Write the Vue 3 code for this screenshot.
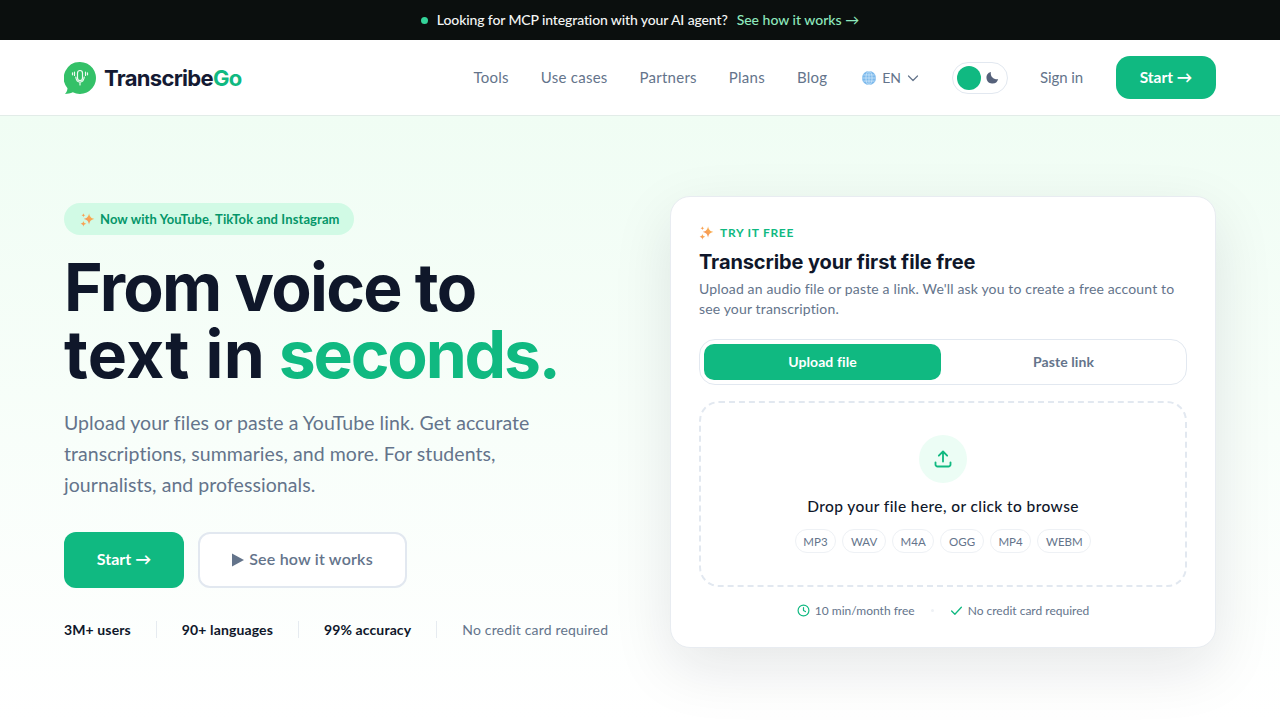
<template>
  <div class="page">
    <div class="promo">
      <span class="promo-dot"></span>
      <span class="promo-text">Looking for MCP integration with your AI agent?</span>
      <a class="promo-link">See how it works →</a>
    </div>

    <header class="nav">
      <a class="logo">
        <svg class="logo-mark" width="32" height="32" viewBox="0 0 32 32">
          <path d="M16 0a16 16 0 1 1-7.2 30.3C6.600 31.500 3.500 32 1 32c1.400-1.500 2.300-3.300 2.500-5.800A16 16 0 0 1 16 0z" fill="#34c168" />
          <g fill="none" stroke="#fff" stroke-width="1.200" stroke-linecap="round" opacity=".92">
            <rect x="13.500" y="8.500" width="5" height="10" rx="2.500" />
            <path d="M11.800 15c.3 3 2 5 4.200 5s3.900-2 4.200-5M16 20v3" />
            <path d="M10.500 10v3.500M8.500 10.800v2M21.500 10v3.500M23.500 10.800v2" />
          </g>
        </svg>
        <span class="logo-text">Transcribe<em>Go</em></span>
      </a>
      <nav class="nav-links">
        <a v-for="link in navLinks" :key="link">{{ link }}</a>
      </nav>
      <div class="lang">
        <svg width="14" height="14" viewBox="0 0 16 16">
          <circle cx="8" cy="8" r="8" fill="#7cb9ec" />
          <g fill="none" stroke="#d6ebfb" stroke-width=".8">
            <ellipse cx="8" cy="8" rx="3.500" ry="8" />
            <path d="M8 0v16M0 8h16M1.600 4.500h12.800M1.600 11.500h12.800" />
          </g>
        </svg>
        <span>EN</span>
        <svg width="12" height="12" viewBox="0 0 12 12" fill="none" stroke="#64748b" stroke-width="1.200" stroke-linecap="round" stroke-linejoin="round"><path d="M1.500 4l4.500 4.500L10.500 4" /></svg>
      </div>
      <div class="theme">
        <span class="theme-knob"></span>
        <svg width="15" height="15" viewBox="0 0 24 24" fill="#55617a"><path d="M21 14.500A9.500 9.500 0 0 1 9.500 3a9.500 9.500 0 1 0 11.500 11.500z" /></svg>
      </div>
      <a class="signin">Sign in</a>
      <a class="nav-start">Start →</a>
    </header>

    <main class="hero">
      <section class="hero-left">
        <div class="badge">
          <svg width="15" height="15" viewBox="0 0 24 24"><use href="#sparkle" /></svg>
          Now with YouTube, TikTok and Instagram
        </div>
        <h1 class="headline">From voice to<br /><span class="headline-mid">text in</span> <em>seconds.</em></h1>
        <p class="lede">Upload your files or paste a YouTube link. Get accurate transcriptions, summaries, and more. For students, journalists, and professionals.</p>
        <div class="cta-row">
          <a class="cta-start">Start →</a>
          <a class="cta-video">
            <svg width="12" height="14" viewBox="0 0 12 14" fill="#64748b"><path d="M0 .5v13L12 7z" /></svg>
            See how it works
          </a>
        </div>
        <ul class="stats">
          <li v-for="stat in stats" :key="stat">{{ stat }}</li>
          <li class="stats-muted">No credit card required</li>
        </ul>
      </section>

      <section class="card">
        <div class="eyebrow">
          <svg width="15" height="15" viewBox="0 0 24 24">
            <defs>
              <linearGradient id="spark-fill" x1="0" y1="1" x2="1" y2="0">
                <stop offset="0" stop-color="#f4845f" />
                <stop offset="1" stop-color="#fcc14a" />
              </linearGradient>
              <g id="sparkle" fill="url(#spark-fill)">
                <path d="M14.500 2c1 5.500 2.800 7.800 8.500 9-5.700 1.200-7.500 3.500-8.500 9-1-5.500-2.800-7.800-8.500-9 5.700-1.200 7.500-3.500 8.500-9z" />
                <path d="M5.500 14c.5 3 1.400 4 4.500 4.800-3.100.7-4 1.700-4.500 4.700-.5-3-1.400-4-4.500-4.700 3.100-.8 4-1.800 4.500-4.800z" />
                <path d="M5.500 1.500c.3 2.200 1 3 3.200 3.500-2.200.5-2.900 1.300-3.200 3.500C5.200 6.300 4.500 5.500 2.300 5c2.200-.5 2.900-1.300 3.200-3.500z" />
              </g>
            </defs>
            <use href="#sparkle" />
          </svg>
          <span>TRY IT FREE</span>
        </div>
        <h2 class="card-title">Transcribe your first file free</h2>
        <p class="card-sub">Upload an audio file or paste a link. We'll ask you to create a free account to see your transcription.</p>

        <div class="tabs">
          <button class="tab tab-active">Upload file</button>
          <button class="tab">Paste link</button>
        </div>

        <div class="drop">
          <span class="drop-icon">
            <svg width="20" height="20" viewBox="0 0 24 24" fill="none" stroke="#10b981" stroke-width="2.200" stroke-linecap="round" stroke-linejoin="round">
              <path d="M12 15V3.500M7 8l5-5 5 5M3 16v2.500A2.500 2.500 0 0 0 5.500 21h13a2.500 2.500 0 0 0 2.500-2.500V16" />
            </svg>
          </span>
          <p class="drop-text">Drop your file here, or click to browse</p>
          <div class="formats">
            <span v-for="format in formats" :key="format" class="format">{{ format }}</span>
          </div>
        </div>

        <div class="card-foot">
          <span class="foot-item">
            <svg width="13" height="13" viewBox="0 0 24 24" fill="none" stroke="#10b981" stroke-width="2.200" stroke-linecap="round" stroke-linejoin="round"><circle cx="12" cy="12" r="10" /><path d="M12 6.500V12l3.500 2" /></svg>
            10 min/month free
          </span>
          <span class="foot-dot"></span>
          <span class="foot-item">
            <svg width="13" height="13" viewBox="0 0 24 24" fill="none" stroke="#10b981" stroke-width="2.400" stroke-linecap="round" stroke-linejoin="round"><path d="M3 13l6 6L21 6" /></svg>
            No credit card required
          </span>
        </div>
      </section>
    </main>
  </div>
</template>

<script setup>
const navLinks = ['Tools', 'Use cases', 'Partners', 'Plans', 'Blog']
const stats = ['3M+ users', '90+ languages', '99% accuracy']
const formats = ['MP3', 'WAV', 'M4A', 'OGG', 'MP4', 'WEBM']
</script>

<style scoped>
.page {
  height: 720px;
  overflow: hidden;
  display: flex;
  flex-direction: column;
  font-family: Lato, "Noto Sans", sans-serif;
  color: #0f172a;
  background: #fff;
}

.promo {
  height: 40px;
  flex: none;
  box-sizing: border-box;
  display: flex;
  align-items: center;
  justify-content: center;
  padding-bottom: 2px;
  background: #0b0f0e;
  font-size: 14px;
  font-weight: 500;
}

.promo-dot {
  width: 7px;
  height: 7px;
  margin-top: 2px;
  border-radius: 50%;
  background: #34d399;
  margin-right: 9px;
}

.promo-text {
  color: #f4f6f5;
  letter-spacing: -0.12px;
}

.promo-link {
  margin-left: 9px;
  color: #8ee8bd;
}

.nav {
  height: 75px;
  flex: none;
  box-sizing: content-box;
  display: flex;
  align-items: center;
  padding: 0 64px;
  background: #fff;
  border-bottom: 1px solid #e2ece8;
}

.logo {
  display: flex;
  align-items: center;
  gap: 8px;
  margin-right: auto;
}

.logo-text {
  font-family: Inter, sans-serif;
  font-size: 22px;
  font-weight: 700;
  letter-spacing: -0.7px;
  color: #141a33;
}

.logo-text em {
  font-style: normal;
  color: #10b981;
}

.nav-links {
  display: flex;
  gap: 32px;
  padding-bottom: 2px;
  font-size: 15px;
  letter-spacing: 0.25px;
  color: #64748b;
}

.lang {
  display: flex;
  align-items: center;
  gap: 6px;
  margin-left: 35px;
  font-size: 14px;
  color: #64748b;
}

.theme {
  width: 56px;
  height: 32px;
  margin-left: 33px;
  box-sizing: border-box;
  display: flex;
  align-items: center;
  gap: 4px;
  padding-left: 4px;
  border: 1px solid #e2e8f0;
  border-radius: 16px;
  background: #fff;
}

.theme-knob {
  width: 24px;
  height: 24px;
  border-radius: 50%;
  background: #10b981;
}

.signin {
  margin-left: 32px;
  padding-bottom: 2px;
  font-size: 15px;
  letter-spacing: -0.1px;
  color: #64748b;
}

.nav-start {
  width: 100px;
  height: 43px;
  box-sizing: border-box;
  margin-left: 33px;
  padding-bottom: 2px;
  display: flex;
  align-items: center;
  justify-content: center;
  border-radius: 14px;
  background: #10b981;
  color: #fff;
  font-size: 15.500px;
  font-weight: 700;
}

.hero {
  flex: 1;
  display: grid;
  grid-template-columns: 1fr 546px;
  align-items: start;
  padding: 80px 64px 0;
  background: linear-gradient(180deg, #f0fdf4 0%, #ffffff 100%);
}

.hero-left {
  padding-top: 7px;
}

.badge {
  width: 290px;
  height: 32px;
  box-sizing: border-box;
  display: flex;
  align-items: center;
  gap: 5px;
  padding-left: 16px;
  border-radius: 16px;
  background: #d1fae5;
  color: #059669;
  font-size: 13px;
  font-weight: 700;
  letter-spacing: 0.1px;
  white-space: nowrap;
}

.headline {
  margin: 19px 0 0;
  font-family: Inter, sans-serif;
  font-size: 66px;
  line-height: 67px;
  font-weight: 700;
  letter-spacing: -1.7px;
  color: #0f172a;
}

.headline-mid {
  letter-spacing: 0.2px;
}

.headline em {
  font-style: normal;
  letter-spacing: -2.2px;
  color: #10b981;
}

.lede {
  width: 500px;
  margin: 19px 0 0;
  font-size: 19.500px;
  line-height: 31px;
  letter-spacing: 0.06px;
  color: #64748b;
}

.cta-row {
  display: flex;
  gap: 14px;
  margin-top: 32px;
}

.cta-start {
  width: 120px;
  height: 56px;
  box-sizing: border-box;
  padding-bottom: 4px;
  display: flex;
  align-items: center;
  justify-content: center;
  border-radius: 12px;
  background: #10b981;
  color: #fff;
  font-size: 16px;
  font-weight: 700;
}

.cta-video {
  width: 209px;
  height: 56px;
  box-sizing: border-box;
  padding-bottom: 4px;
  display: flex;
  align-items: center;
  justify-content: center;
  gap: 5px;
  border: 2px solid #e2e8f0;
  border-radius: 12px;
  background: #fff;
  color: #64748b;
  font-size: 16px;
  font-weight: 600;
  letter-spacing: 0.2px;
}

.cta-video svg {
  margin-top: 3px;
}

.stats {
  display: flex;
  align-items: center;
  margin: 33px 0 0;
  padding: 0;
  list-style: none;
  font-size: 14px;
  font-weight: 700;
  letter-spacing: 0.12px;
  color: #0f172a;
}

.stats li {
  padding-right: 25px;
  margin-right: 25px;
  border-right: 1px solid #e6ebf0;
  line-height: 17px;
}

.stats .stats-muted {
  padding: 0;
  margin: 0;
  border: 0;
  font-weight: 400;
  letter-spacing: 0.18px;
  color: #64748b;
}

.card {
  height: 452px;
  box-sizing: border-box;
  padding: 27px 28px 0;
  border: 1px solid #e8ecf1;
  border-radius: 20px;
  background: #fff;
  box-shadow: 0 20px 60px rgba(15, 23, 42, 0.1);
}

.eyebrow {
  display: flex;
  align-items: center;
  gap: 6px;
  height: 16px;
  font-size: 12px;
  font-weight: 700;
  letter-spacing: 0.7px;
  color: #10b981;
}

.card-title {
  margin: 9px 0 0;
  font-family: Inter, sans-serif;
  font-size: 20px;
  line-height: 26px;
  font-weight: 700;
  letter-spacing: -0.1px;
  color: #0f172a;
}

.card-sub {
  margin: 4px 0 0;
  font-size: 14px;
  line-height: 20px;
  letter-spacing: 0.15px;
  color: #64748b;
}

.tabs {
  height: 46px;
  box-sizing: border-box;
  margin-top: 20px;
  display: grid;
  grid-template-columns: 237px 1fr;
  gap: 4px;
  padding: 4px;
  border: 1px solid #e2e8f0;
  border-radius: 16px;
}

.tab {
  border: 0;
  border-radius: 10px;
  padding: 0 0 2px;
  background: none;
  font-family: inherit;
  font-size: 14px;
  font-weight: 700;
  letter-spacing: 0.1px;
  color: #64748b;
}

.tab-active {
  background: #10b981;
  color: #fff;
}

.drop {
  height: 186px;
  box-sizing: border-box;
  margin-top: 16px;
  display: flex;
  flex-direction: column;
  align-items: center;
  padding-top: 32px;
  border: 2px dashed #e2e8f0;
  border-radius: 20px;
}

.drop-icon {
  width: 48px;
  height: 48px;
  display: flex;
  align-items: center;
  justify-content: center;
  border-radius: 50%;
  background: #ecfdf5;
}

.drop-text {
  margin: 13px 0 0;
  font-size: 15.500px;
  line-height: 20px;
  font-weight: 500;
  letter-spacing: 0.4px;
  color: #0f172a;
}

.formats {
  display: flex;
  gap: 6px;
  margin-top: 13px;
}

.format {
  height: 22px;
  box-sizing: content-box;
  padding: 0 7.670px;
  display: flex;
  align-items: center;
  border: 1px solid #eef1f5;
  border-radius: 12px;
  font-size: 11.500px;
  color: #64748b;
}

.card-foot {
  display: flex;
  align-items: center;
  justify-content: center;
  gap: 16px;
  margin-top: 16px;
  font-size: 12px;
  color: #64748b;
}

.foot-item {
  display: flex;
  align-items: center;
  gap: 5px;
}

.foot-dot {
  width: 3px;
  height: 3px;
  border-radius: 50%;
  background: #eef1f5;
}
</style>

<style>
body {
  background: #fff;
}
</style>
